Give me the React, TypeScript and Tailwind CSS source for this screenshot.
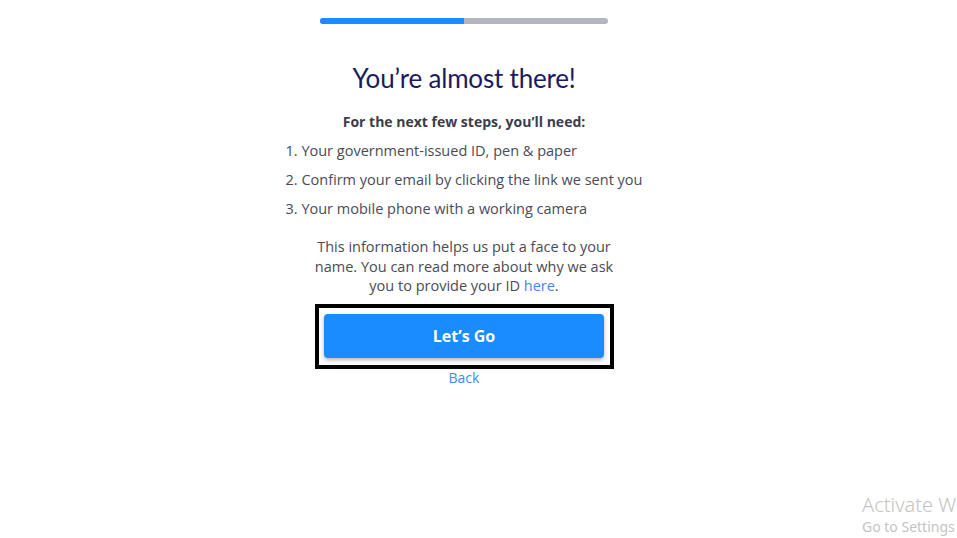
import React from "react";

export default function App() {
  return (
    <div className="relative w-[957px] h-[538px] overflow-hidden bg-white" style={{ fontFamily: '"Open Sans", sans-serif' }}>
      <div className="w-[928px] flex flex-col items-center pt-[18px]">
        <div className="flex w-[288px] h-[6px] rounded-full overflow-hidden bg-[#b3b4bd]">
          <div className="w-[144px] h-full bg-[#1a8cff]" />
        </div>
        <h1 className="mt-[37px] text-[26px] leading-[34px] text-[#1c1a5e] tracking-[-0.2px]" style={{ fontFamily: 'Lato, "Open Sans", sans-serif' }}>
          You’re almost there!
        </h1>
        <p className="mt-[17px] text-[14px] leading-[20px] font-bold text-[#3d3d4a]">For the next few steps, you’ll need:</p>
        <ol className="mt-[9px] flex flex-col gap-[9px] text-[14.5px] leading-[20px] text-[#4a4a58] w-fit">
          <li>1. Your government-issued ID, pen &amp; paper</li>
          <li>2. Confirm your email by clicking the link we sent you</li>
          <li>3. Your mobile phone with a working camera</li>
        </ol>
        <p className="mt-[18px] w-[310px] text-center text-[14.5px] leading-[19.5px] text-[#4a4a58]">
          This information helps us put a face to your name. You can read more about why we ask you to provide your ID <a className="text-[#4d7ff5]">here</a>.
        </p>
        <div className="mt-[8px] border-[4px] border-black w-[299px] h-[65px] flex items-center justify-center">
          <button className="w-[280px] h-[44px] rounded-[4px] bg-[#1a8cff] text-white font-bold text-[16px] shadow-[0_2px_4px_rgba(0,0,0,0.3)]">
            Let’s Go
          </button>
        </div>
        <a className="-mt-[1px] text-[14px] leading-[20px] text-[#3d8af7]">Back</a>
      </div>
      <div className="absolute left-[862px] top-[493px] whitespace-nowrap text-[#c4c4c4]" style={{ fontFamily: '"Noto Sans", sans-serif' }}>
        <div className="text-[20px] leading-[24px] font-light">Activate W</div>
        <div className="text-[14px] leading-[20px]">Go to Settings</div>
      </div>
    </div>
  );
}
